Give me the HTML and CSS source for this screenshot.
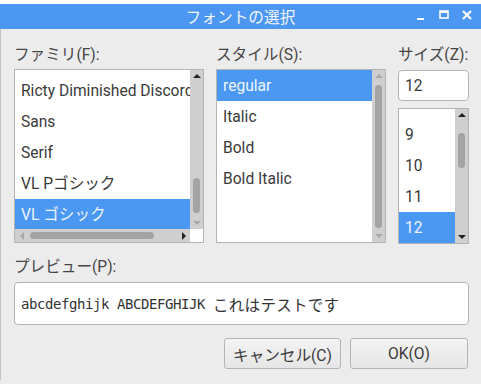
FILE: index.html
```html
<!DOCTYPE html>
<html lang="ja">
<head>
<meta charset="utf-8">
<title>フォントの選択</title>
<link rel="stylesheet" href="styles.css">
</head>
<body>
<div class="window">
  <div class="titlebar">
    <span class="title">フォントの選択</span>
    <div class="wctl">
      <svg class="wbtn" width="12" height="12" viewBox="0 0 12 12"><rect x="2" y="8" width="7" height="2" fill="#fff"/></svg>
      <svg class="wbtn" width="12" height="12" viewBox="0 0 12 12"><rect x="2" y="1" width="8" height="7" fill="none" stroke="#fff" stroke-width="1.6"/><rect x="2" y="1" width="8" height="2" fill="#fff"/></svg>
      <svg class="wbtn" width="12" height="12" viewBox="0 0 12 12"><path d="M2 1 L10 9 M10 1 L2 9" stroke="#fff" stroke-width="2.2"/></svg>
    </div>
  </div>
  <div class="content">
    <div class="cols">
      <div class="col col-family">
        <div class="label">ファミリ(F):</div>
        <div class="listbox family-box">
          <div class="rows family-rows">
            <div class="row">Ricty Diminished Discord</div>
            <div class="row">Sans</div>
            <div class="row">Serif</div>
            <div class="row">VL Pゴシック</div>
            <div class="row sel">VL ゴシック</div>
          </div>
          <div class="vsb">
            <div class="arr"><span class="tri up dark"></span></div>
            <div class="track"><div class="thumb fam-thumb"></div></div>
            <div class="arr"><span class="tri down light"></span></div>
          </div>
          <div class="hsb">
            <div class="harr"><span class="tri left light"></span></div>
            <div class="htrack"><div class="hthumb"></div></div>
            <div class="harr"><span class="tri right dark"></span></div>
          </div>
          <div class="corner"></div>
        </div>
      </div>
      <div class="col col-style">
        <div class="label">スタイル(S):</div>
        <div class="listbox style-box">
          <div class="rows">
            <div class="row sel">regular</div>
            <div class="row">Italic</div>
            <div class="row">Bold</div>
            <div class="row">Bold Italic</div>
          </div>
          <div class="vsb">
            <div class="arr"><span class="tri up light"></span></div>
            <div class="track"><div class="thumb style-thumb"></div></div>
            <div class="arr"><span class="tri down light"></span></div>
          </div>
        </div>
      </div>
      <div class="col col-size">
        <div class="label">サイズ(Z):</div>
        <div class="entry size-entry">12</div>
        <div class="listbox size-box">
          <div class="rows size-rows">
            <div class="row">8</div>
            <div class="row">9</div>
            <div class="row">10</div>
            <div class="row">11</div>
            <div class="row sel">12</div>
          </div>
          <div class="vsb">
            <div class="arr"><span class="tri up dark"></span></div>
            <div class="track"><div class="thumb size-thumb"></div></div>
            <div class="arr"><span class="tri down dark"></span></div>
          </div>
        </div>
      </div>
    </div>
    <div class="label preview-label">プレビュー(P):</div>
    <div class="entry preview"><span class="pv-ascii">abcdefghijk ABCDEFGHIJK </span><span class="pv-cjk">これはテストです</span></div>
    <div class="buttons">
      <button class="btn btn-cancel">キャンセル(C)</button>
      <button class="btn btn-ok">OK(O)</button>
    </div>
  </div>
</div>
</body>
</html>
```
FILE: styles.css
```css
html, body {
  margin: 0;
  padding: 0;
  background: #ffffff;
}
body {
  font-family: Roboto, "Noto Sans CJK JP", sans-serif;
  font-size: 15.6px;
  color: #3a3a3a;
}
.window {
  margin-top: 4px;
  width: 481px;
  height: 380px;
  background: #ececec;
  box-sizing: border-box;
  overflow: hidden;
}
.titlebar {
  height: 25px;
  background: #4c97f2;
  display: flex;
  align-items: center;
  justify-content: center;
  position: relative;
}
.title {
  color: #f2f6ff;
  font-family: "Noto Sans CJK JP", sans-serif;
  font-size: 15.7px;
  line-height: 25px;
}
.wctl {
  position: absolute;
  right: 8px;
  top: 6px;
  display: flex;
  gap: 11px;
}
.wbtn { display: block; }
.content {
  border-left: 1px solid #c4c4c4;
  padding: 16px 12px 0 13px;
  height: 351px;
  box-sizing: border-box;
}
.cols {
  display: flex;
}
.col { display: flex; flex-direction: column; }
.col-family { width: 190px; margin-right: 12px; }
.col-style { width: 170px; margin-right: 12px; }
.col-size { width: 71px; }
.label {
  height: 20px;
  line-height: 20px;
  color: #454545;
  white-space: nowrap;
}
.listbox {
  margin-top: 4px;
  height: 174px;
  border: 1px solid #b4b4b4;
  background: #fff;
  box-sizing: border-box;
  display: grid;
  grid-template-columns: 1fr 13px;
  grid-template-rows: 1fr;
  overflow: hidden;
}
.family-box {
  grid-template-rows: 1fr 13px;
}
.rows {
  overflow: hidden;
  min-width: 0;
}
.family-rows { padding-top: 5px; }
.row {
  height: 31px;
  box-sizing: border-box;
  padding-top: 2px;
  line-height: 29px;
  padding-left: 6px;
  white-space: nowrap;
  color: #3a3a3a;
}
.row.sel {
  background: #4a98f2;
  color: #eef4ff;
}
.vsb {
  background: #cfcfcf;
  display: flex;
  flex-direction: column;
  align-items: center;
  min-height: 0;
}
.arr {
  height: 12px;
  width: 13px;
  display: flex;
  align-items: center;
  justify-content: center;
  flex: none;
}
.track {
  flex: 1;
  display: flex;
  flex-direction: column;
  align-items: center;
}
.thumb {
  width: 7px;
  border-radius: 4px;
  background: #a3a3a3;
}
.fam-thumb { margin-top: 96px; height: 35px; }
.style-thumb { margin-top: 3px; height: 143px; }
.size-thumb { margin-top: 12px; height: 35px; }
.tri {
  width: 0;
  height: 0;
  display: block;
}
.tri.up { border-left: 4px solid transparent; border-right: 4px solid transparent; border-bottom: 4px solid #222; }
.tri.down { border-left: 4px solid transparent; border-right: 4px solid transparent; border-top: 4px solid #222; }
.tri.left { border-top: 4px solid transparent; border-bottom: 4px solid transparent; border-right: 4px solid #222; }
.tri.right { border-top: 4px solid transparent; border-bottom: 4px solid transparent; border-left: 4px solid #222; }
.tri.up.light { border-bottom-color: #a9a9a9; }
.tri.down.light { border-top-color: #a9a9a9; }
.tri.left.light { border-right-color: #a9a9a9; }
.hsb {
  background: #cfcfcf;
  display: flex;
  align-items: center;
}
.harr {
  width: 13px;
  height: 13px;
  display: flex;
  align-items: center;
  justify-content: center;
  flex: none;
}
.htrack {
  flex: 1;
  display: flex;
  align-items: center;
}
.hthumb {
  margin-left: 2px;
  width: 124px;
  height: 7px;
  border-radius: 4px;
  background: #a3a3a3;
}
.corner { background: #fff; }
.entry {
  background: #fff;
  border: 1px solid #b4b4b4;
  border-radius: 4px;
  box-sizing: border-box;
}
.size-entry {
  margin-top: 5px;
  height: 31px;
  padding-top: 2px;
  line-height: 27px;
  padding-left: 6px;
  color: #3a3a3a;
}
.size-box {
  margin-top: 7px;
  height: 136px;
}
.size-rows .row:first-child { margin-top: -21px; }
.preview-label {
  margin-top: 13px;
}
.preview {
  margin-top: 5px;
  height: 43px;
  display: flex;
  align-items: center;
  padding-left: 6px;
  white-space: pre;
  color: #333;
}
.pv-ascii {
  font-family: "DejaVu Sans Mono", monospace;
  font-size: 14px;
  letter-spacing: -0.43px;
}
.pv-cjk {
  font-family: "Noto Sans CJK JP", sans-serif;
  font-size: 15.5px;
  letter-spacing: 0.3px;
}
.buttons {
  display: flex;
  justify-content: flex-end;
  gap: 9px;
  margin-top: 13px;
  padding-right: 1px;
}
.btn {
  height: 31px;
  border: 1px solid #b4b4b4;
  border-radius: 3px;
  background: linear-gradient(#f3f3f3, #e6e6e6);
  font-family: Roboto, "Noto Sans CJK JP", sans-serif;
  font-size: 15.6px;
  color: #3a3a3a;
  padding: 0;
}
.btn-cancel { width: 117px; }
.btn-ok { width: 118px; }
```
